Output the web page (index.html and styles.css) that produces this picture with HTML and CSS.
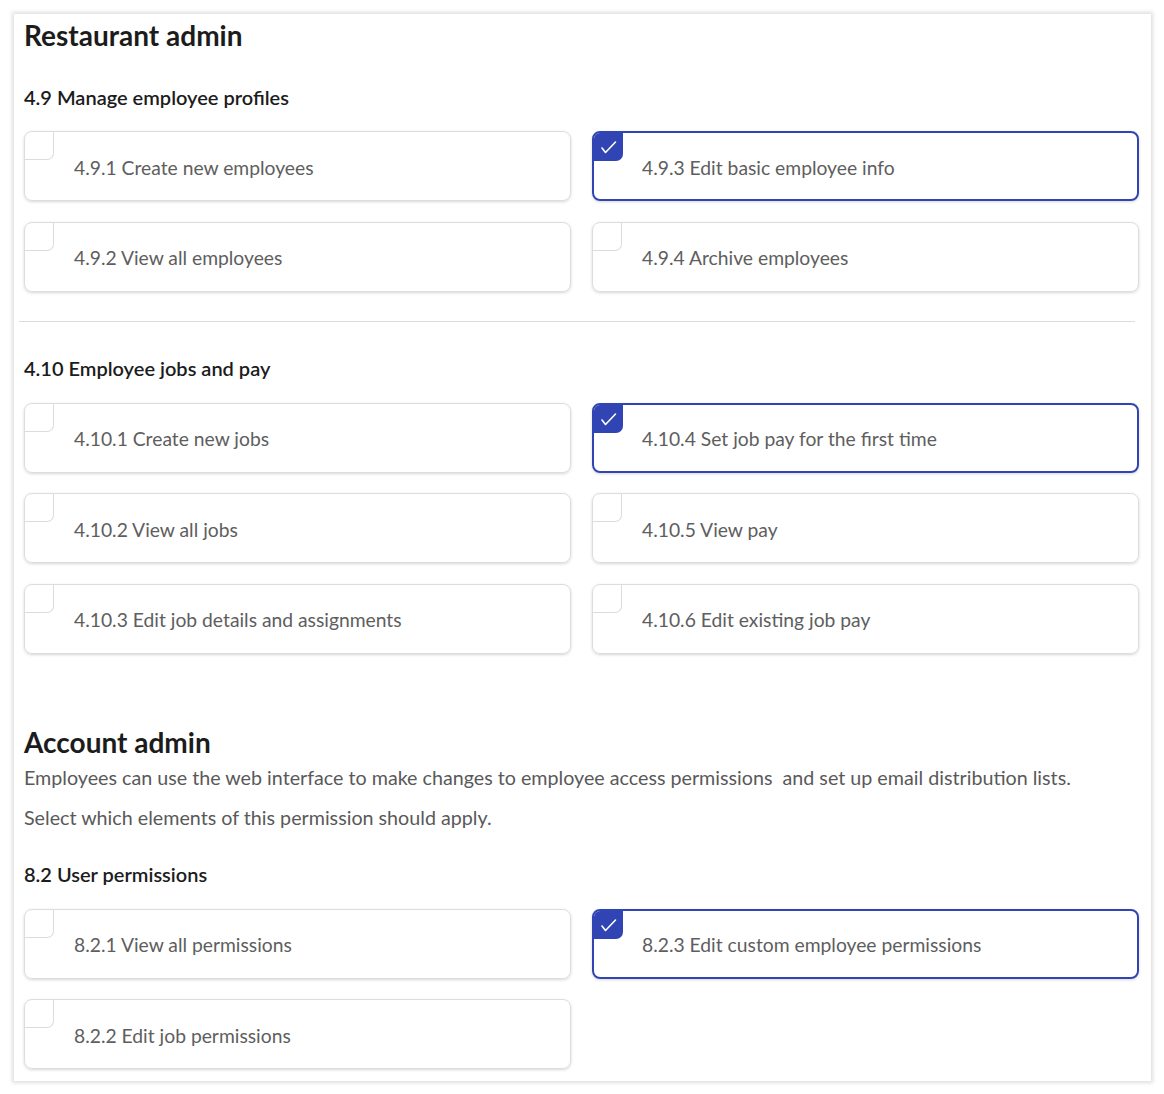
FILE: index.html
```html
<!DOCTYPE html>
<html lang="en">
<head>
    <meta charset="UTF-8">
    <meta name="viewport" content="width=device-width, initial-scale=1.0">
    <title>Permissions</title>
    <link rel="stylesheet" href="styles.css">
</head>
<body>
    <div class="panel">
        <h1 class="title">Restaurant admin</h1>

        <h3 class="group-title">4.9 Manage employee profiles</h3>
        <div class="option-grid">
            <label class="option">
                <span class="check"></span>
                <span class="option-text">4.9.1 Create new employees</span>
            </label>
            <label class="option checked">
                <span class="check"><svg viewBox="0 0 30 30" width="30" height="30"><path d="M9 16 L12.5 20.5 L22.5 10" fill="none" stroke="#fff" stroke-width="1.6" stroke-linecap="round" stroke-linejoin="round"/></svg></span>
                <span class="option-text">4.9.3 Edit basic employee info</span>
            </label>
            <label class="option">
                <span class="check"></span>
                <span class="option-text">4.9.2 View all employees</span>
            </label>
            <label class="option">
                <span class="check"></span>
                <span class="option-text">4.9.4 Archive employees</span>
            </label>
        </div>

        <hr class="divider">

        <h3 class="group-title second">4.10 Employee jobs and pay</h3>
        <div class="option-grid">
            <label class="option">
                <span class="check"></span>
                <span class="option-text">4.10.1 Create new jobs</span>
            </label>
            <label class="option checked">
                <span class="check"><svg viewBox="0 0 30 30" width="30" height="30"><path d="M9 16 L12.5 20.5 L22.5 10" fill="none" stroke="#fff" stroke-width="1.6" stroke-linecap="round" stroke-linejoin="round"/></svg></span>
                <span class="option-text">4.10.4 Set job pay for the first time</span>
            </label>
            <label class="option">
                <span class="check"></span>
                <span class="option-text">4.10.2 View all jobs</span>
            </label>
            <label class="option">
                <span class="check"></span>
                <span class="option-text">4.10.5 View pay</span>
            </label>
            <label class="option">
                <span class="check"></span>
                <span class="option-text">4.10.3 Edit job details and assignments</span>
            </label>
            <label class="option">
                <span class="check"></span>
                <span class="option-text">4.10.6 Edit existing job pay</span>
            </label>
        </div>

        <h2 class="title account">Account admin</h2>
        <p class="desc">Employees can use the web interface to make changes to employee access permissions &nbsp;and set up email distribution lists.</p>
        <p class="desc second">Select which elements of this permission should apply.</p>

        <h3 class="group-title third">8.2 User permissions</h3>
        <div class="option-grid">
            <label class="option">
                <span class="check"></span>
                <span class="option-text">8.2.1 View all permissions</span>
            </label>
            <label class="option checked">
                <span class="check"><svg viewBox="0 0 30 30" width="30" height="30"><path d="M9 16 L12.5 20.5 L22.5 10" fill="none" stroke="#fff" stroke-width="1.6" stroke-linecap="round" stroke-linejoin="round"/></svg></span>
                <span class="option-text">8.2.3 Edit custom employee permissions</span>
            </label>
            <label class="option">
                <span class="check"></span>
                <span class="option-text">8.2.2 Edit job permissions</span>
            </label>
        </div>
    </div>
</body>
</html>
```

FILE: styles.css
```css
*{
    margin: 0;
    padding: 0;
    box-sizing: border-box;
}
body {
    background-color: #fff;
    font-family: Lato, "Liberation Sans", sans-serif;
    color: #1c1c1c;
}
.panel {
    width: 1137px;
    margin: 14px 0 14px 14px;
    padding: 0 12px 12px 10px;
    background-color: #fff;
    box-shadow: 0 0 4px 2px rgba(0, 0, 0, .13);
}
.title {
    font-size: 28px;
    line-height: 34px;
    font-weight: 700;
    padding-top: 4px;
}
.title.account {
    padding-top: 0;
    margin-top: 71px;
}
.group-title {
    font-size: 20px;
    line-height: 24px;
    font-weight: 600;
    margin-top: 33px;
    margin-bottom: 22px;
}
.group-title.second {
    margin-top: 34px;
    margin-bottom: 23px;
}
.group-title.third {
    margin-top: 32px;
    margin-bottom: 23px;
}
.divider {
    border: none;
    border-top: 1px solid #dcdcdc;
    margin: 29px 4px 0 -5px;
}
.desc {
    font-size: 19.7px;
    line-height: 24px;
    color: #595959;
    margin-top: 7px;
}
.desc.second {
    margin-top: 16px;
}
.option-grid {
    display: grid;
    grid-template-columns: 1fr 1fr;
    column-gap: 21px;
    row-gap: 20.5px;
}
.option {
    position: relative;
    display: flex;
    align-items: center;
    height: 70px;
    padding-left: 49px;
    border: 1px solid #dddddd;
    border-radius: 8px;
    box-shadow: 0 1px 3px rgba(0, 0, 0, .16);
    overflow: hidden;
}
.option.checked {
    border: 2px solid #3045b3;
    padding-left: 48px;
}
.option-text {
    font-size: 19.3px;
    color: #5e5e5e;
    padding-top: 2px;
}
.check {
    position: absolute;
    left: 0;
    top: 0;
    width: 29px;
    height: 28px;
    border-right: 1px solid #dcdcdc;
    border-bottom: 1px solid #dcdcdc;
    border-bottom-right-radius: 7px;
}
.option.checked .check {
    width: 29px;
    height: 28px;
    border: none;
    background-color: #3045b3;
}
.check svg {
    display: block;
    margin: -1px 0 0 -1px;
}
```
